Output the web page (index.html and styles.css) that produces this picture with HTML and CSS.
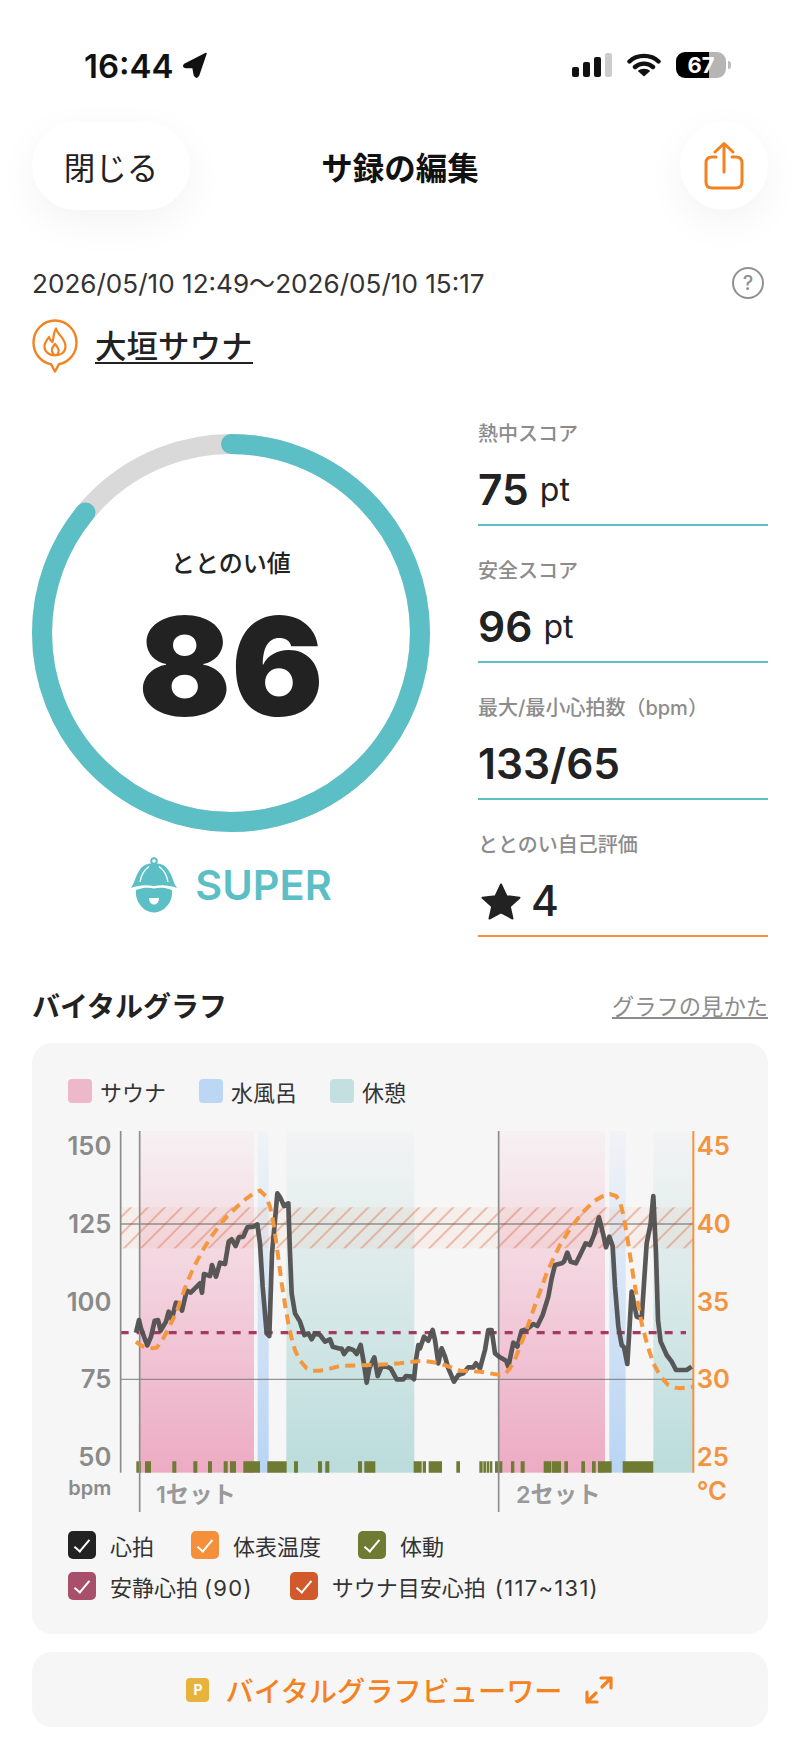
FILE: index.html
```html
<!DOCTYPE html>
<html lang="ja">
<head>
    <meta charset="UTF-8">
    <meta name="viewport" content="width=device-width, initial-scale=1.0">
    <title>サ録の編集</title>
    <link rel="stylesheet" href="styles.css">
</head>
<body>
    <div class="status-bar">
        <div class="status-left">
            <span class="clock">16:44</span>
            <svg class="arrow-icon" width="24" height="26" viewBox="0 0 24 26"><path d="M23 1.500 L1.500 12.500 Q-0.500 15 3 15.500 L10 15.500 L11.500 23.500 Q13.500 27 15.500 23.500 Z" fill="#111" stroke="#111" stroke-width="1.500" stroke-linejoin="round"/></svg>
        </div>
        <div class="status-right">
            <div class="signal">
                <i class="bar1"></i><i class="bar2"></i><i class="bar3"></i><i class="bar4"></i>
            </div>
            <svg width="34" height="25" viewBox="0 0 34 25"><path d="M2.5 9.5 C10 2 24 2 31.5 9.5 M8 15 C13 10.5 21 10.5 26 15" fill="none" stroke="#111" stroke-width="4.4" stroke-linecap="round"/><path d="M17 24.5 L10.8 19 C14 16 20 16 23.2 19 Z" fill="#111"/></svg>
            <div class="battery"><span>67</span></div>
            <div class="battery-nub"></div>
        </div>
    </div>

    <div class="top-bar">
        <div><button class="close-btn">閉じる</button></div>
        <div class="page-title">サ録の編集</div>
        <div class="share-wrap">
            <button class="share-btn">
                <svg width="40" height="50" viewBox="0 0 40 50"><path d="M12 16 H8 Q2 16 2 22 V41 Q2 47 8 47 H32 Q38 47 38 41 V22 Q38 16 32 16 H28 M20 31 V3 M11 11 L20 2.5 L29 11" fill="none" stroke="#f58220" stroke-width="3" stroke-linecap="round" stroke-linejoin="round"/></svg>
            </button>
        </div>
    </div>

    <div class="date-row">
        <span class="date-text">2026/05/10 12:49～2026/05/10 15:17</span>
        <span class="help-icon">?</span>
    </div>

    <div class="place-row">
        <svg width="46" height="54" viewBox="0 0 46 54">
            <path d="M19 45.2 C8.500 43.400 1.500 34 1.500 23.500 C1.500 11.500 11 1.500 23 1.500 C35 1.500 44.500 11.500 44.500 23.500 C44.500 34 37.500 43.400 27 45.200 L23 52.500 Z" fill="none" stroke="#f58220" stroke-width="2.4" stroke-linejoin="round"/>
            <path d="M24 9.500 C25.500 16 33.500 19 33.500 27.500 C33.500 33.500 28.500 36.500 23 36.500 C17 36.500 12.500 32.500 12.500 27.500 C12.500 23.500 15 21 17 18 C18 21 19 22 20.500 23 C22 19 21 14 24 9.500 Z M23 36.500 C20 34.500 19 31 20.500 28.500 L23 25 C25.500 28 27.500 30 26.500 33 C26 35 24.500 36.500 23 36.500" fill="none" stroke="#f58220" stroke-width="2.200" stroke-linejoin="round"/>
        </svg>
        <a class="place-name">大垣サウナ</a>
    </div>

    <div class="score-section">
        <div class="score-left">
            <div class="ring">
                <svg width="398" height="398" viewBox="0 0 398 398">
                    <circle cx="199" cy="199" r="189" fill="none" stroke="#d9d9d9" stroke-width="20"/>
                    <circle cx="199" cy="199" r="189" fill="none" stroke="#5cbfc6" stroke-width="20" stroke-linecap="round" stroke-dasharray="1021 1188" transform="rotate(-90 199 199)"/>
                </svg>
                <div class="ring-text">
                    <div class="ring-label">ととのい値</div>
                    <div class="ring-value">86</div>
                </div>
            </div>
            <div class="rank">
                <svg width="48" height="56" viewBox="0 0 48 56">
                    <circle cx="24" cy="4" r="2.800" fill="none" stroke="#5cbfc6" stroke-width="2"/>
                    <path d="M1 31 C5 26 6 14 14 8.500 C19 5.500 29 5.500 34 8.500 C42 14 43 26 47 31 C39 28 32 27.500 24 29 C16 27.500 9 28 1 31 Z" fill="#5cbfc6"/>
                    <path d="M10 25 C11 19 14 13 19 9.500 M38 25 C37 19 34 13 29 9.500" fill="none" stroke="#fff" stroke-width="1.300"/>
                    <path d="M6 33 C14 30 19 30.500 24 31.500 C29 30.500 34 30 42 33 C42.500 36 42 40 40.500 43.500 C37.500 50.500 31 55.500 24 55.500 C17 55.500 10.500 50.500 7.500 43.500 C6 40 5.500 36 6 33 Z" fill="#5cbfc6"/>
                    <path d="M19 41 H29 C29 45 27 47.500 24 47.500 C21 47.500 19 45 19 41 Z" fill="#fff"/>
                </svg>
                <span class="rank-name">SUPER</span>
            </div>
        </div>
        <div class="score-right">
            <div class="stat">
                <div class="stat-label">熱中スコア</div>
                <div class="stat-value">75<span class="unit">pt</span></div>
            </div>
            <div class="stat">
                <div class="stat-label">安全スコア</div>
                <div class="stat-value">96<span class="unit">pt</span></div>
            </div>
            <div class="stat">
                <div class="stat-label">最大/最小心拍数（bpm）</div>
                <div class="stat-value">133/65</div>
            </div>
            <div class="stat self-rating">
                <div class="stat-label">ととのい自己評価</div>
                <div class="stat-value">
                    <svg class="star" width="40" height="37" viewBox="0 0 40 37"><path d="M20 1.500 L25.500 13.200 L38.500 14.700 L28.800 23.400 L31.500 35.500 L20 29.300 L8.500 35.500 L11.200 23.400 L1.500 14.700 L14.500 13.200 Z" fill="#222" stroke="#222" stroke-width="2" stroke-linejoin="round"/></svg>
                    4
                </div>
            </div>
        </div>
    </div>

    <div class="graph-head">
        <h2>バイタルグラフ</h2>
        <a class="graph-link">グラフの見かた</a>
    </div>

    <div class="graph-card">
        <div class="zone-legend">
            <div class="zone"><i class="swatch sauna"></i>サウナ</div>
            <div class="zone"><i class="swatch water"></i>水風呂</div>
            <div class="zone"><i class="swatch rest"></i>休憩</div>
        </div>

        <!-- units are 3x screen pixels -->
        <svg class="chart" width="728" height="396" viewBox="0 0 2184 1188">
            <defs>
                <linearGradient id="gradSauna" x1="0" y1="0" x2="0" y2="1">
                    <stop offset="0" stop-color="#f6f1f3"/>
                    <stop offset="1" stop-color="#edabc3"/>
                </linearGradient>
                <linearGradient id="gradWater" x1="0" y1="0" x2="0" y2="1">
                    <stop offset="0" stop-color="#f1f3f6"/>
                    <stop offset="1" stop-color="#b8d4f4"/>
                </linearGradient>
                <linearGradient id="gradRest" x1="0" y1="0" x2="0" y2="1">
                    <stop offset="0" stop-color="#f3f4f4"/>
                    <stop offset="1" stop-color="#bbdcdc"/>
                </linearGradient>
                <pattern id="hatch" width="36" height="36" patternUnits="userSpaceOnUse" patternTransform="rotate(45)">
                    <line x1="18" y1="0" x2="18" y2="36" stroke="#d95c32" stroke-width="3" stroke-opacity=".7"/>
                </pattern>
            </defs>

            <rect x="299" y="33" width="343" height="1025" fill="url(#gradSauna)"/>
            <rect x="653" y="33" width="33" height="1025" fill="url(#gradWater)"/>
            <rect x="739" y="33" width="384" height="1025" fill="url(#gradRest)"/>
            <rect x="1377" y="33" width="318" height="1025" fill="url(#gradSauna)"/>
            <rect x="1708" y="33" width="49" height="1025" fill="url(#gradWater)"/>
            <rect x="1840" y="33" width="120" height="1025" fill="url(#gradRest)"/>

            <rect x="242" y="262" width="1718" height="123" fill="#e8a283" fill-opacity=".1"/>
            <rect x="242" y="262" width="1718" height="123" fill="url(#hatch)"/>

            <line x1="242" y1="312" x2="1960" y2="312" stroke="#6b6b6b" stroke-opacity=".7" stroke-width="4"/>
            <line x1="242" y1="778" x2="1960" y2="778" stroke="#6b6b6b" stroke-opacity=".7" stroke-width="4"/>

            <line x1="242" y1="638" x2="1938" y2="638" stroke="#a53a60" stroke-width="10" stroke-dasharray="24 24"/>

            <path fill="#6f7a33" d="M289 1024h14v34h-14z M315 1024h18v34h-18z M397 1024h12v34h-12z M460 1024h12v34h-12z M504 1024h12v34h-12z M551 1024h12v34h-12z M570 1024h18v34h-18z M610 1024h50v34h-50z M682 1024h58v34h-58z M762 1024h12v34h-12z M834 1024h12v34h-12z M856 1024h12v34h-12z M954 1024h12v34h-12z M973 1024h33v34h-33z M1121 1024h24v34h-24z M1148 1024h10v34h-10z M1166 1024h40v34h-40z M1249 1024h11v34h-11z M1318 1024h10v34h-10z M1330 1024h8v34h-8z M1340 1024h8v34h-8z M1350 1024h7v34h-7z M1365 1024h22v34h-22z M1413 1024h10v34h-10z M1442 1024h12v34h-12z M1511 1024h22v34h-22z M1535 1024h28v34h-28z M1573 1024h11v34h-11z M1624 1024h11v34h-11z M1656 1024h11v34h-11z M1674 1024h41v34h-41z M1748 1024h92v34h-92z"/>

            <line x1="242" y1="33" x2="242" y2="1058" stroke="#8c8c8c" stroke-width="5"/>
            <line x1="299" y1="33" x2="299" y2="1176" stroke="#8c8c8c" stroke-width="5"/>
            <line x1="1376" y1="33" x2="1376" y2="1176" stroke="#8c8c8c" stroke-width="5"/>
            <line x1="1960" y1="33" x2="1960" y2="1058" stroke="#f39440" stroke-width="6"/>

            <polyline class="heart-line" points="288,638 297,600 303,625 312,650 322,676 333,650 344,602 354,600 362,632 378,605 386,575 395,598 408,548 418,552 426,572 440,512 452,518 470,500 480,490 486,518 492,462 510,468 516,435 528,470 540,428 555,432 566,365 575,358 587,378 597,352 610,350 622,322 640,320 652,313 660,370 668,500 680,640 688,648 696,400 705,300 712,220 722,235 732,258 745,250 750,400 755,520 765,580 780,605 793,645 805,640 815,658 825,640 840,645 855,665 870,658 878,680 895,685 905,686 912,702 925,685 940,690 950,702 962,675 970,720 980,788 988,745 1003,712 1013,768 1025,740 1040,740 1052,745 1070,778 1090,778 1098,768 1115,770 1122,778 1128,720 1135,675 1140,685 1152,650 1165,662 1178,630 1185,660 1195,730 1205,685 1215,710 1225,745 1242,785 1255,765 1270,760 1285,742 1300,742 1308,730 1320,745 1335,690 1345,630 1355,630 1365,700 1380,712 1398,722 1405,740 1420,668 1432,680 1445,632 1460,628 1480,612 1492,618 1508,585 1525,530 1535,475 1545,435 1565,430 1572,425 1582,398 1592,425 1608,430 1630,385 1637,370 1650,375 1662,345 1677,292 1690,345 1698,382 1708,350 1718,378 1725,500 1735,620 1745,675 1752,682 1762,732 1775,515 1790,590 1805,595 1820,370 1832,310 1840,228 1848,400 1854,600 1862,665 1880,705 1895,725 1908,750 1940,750 1955,740"/>
            <polyline class="temp-line" points="288,665 303,677 320,683 338,685 350,683 364,665 378,640 394,608 410,575 425,532 440,490 455,456 470,425 490,388 510,355 535,321 560,290 590,261 620,235 642,219 660,212 677,228 690,260 698,296 705,340 715,413 725,490 735,553 745,610 754,652 765,690 780,722 800,745 818,752 840,752 870,746 900,738 950,736 1000,735 1040,733 1080,730 1110,726 1150,722 1200,730 1260,752 1320,755 1380,765 1397,760 1410,745 1425,718 1440,680 1460,627 1480,570 1500,515 1520,460 1540,416 1560,375 1585,335 1610,300 1635,270 1660,245 1685,230 1710,222 1728,228 1740,245 1750,285 1760,340 1770,405 1780,470 1792,540 1805,610 1822,675 1840,730 1862,770 1885,795 1905,803 1920,805 1940,803 1960,800"/>

            <text class="axis-left" x="214" y="106">150</text>
            <text class="axis-left" x="214" y="340">125</text>
            <text class="axis-left" x="214" y="573">100</text>
            <text class="axis-left" x="214" y="805">75</text>
            <text class="axis-left" x="214" y="1038">50</text>
            <text class="axis-unit" x="214" y="1126">bpm</text>
            <text class="set-label" x="348" y="1150">1セット</text>
            <text class="set-label" x="1428" y="1150">2セット</text>
            <text class="axis-right" x="1970" y="106">45</text>
            <text class="axis-right" x="1970" y="340">40</text>
            <text class="axis-right" x="1970" y="573">35</text>
            <text class="axis-right" x="1970" y="805">30</text>
            <text class="axis-right" x="1970" y="1038">25</text>
            <text class="axis-right" x="1970" y="1140">°C</text>
        </svg>

        <div class="series-legend">
            <div class="series-row">
                <label class="series"><i class="check c-heart"></i>心拍</label>
                <label class="series"><i class="check c-temp"></i>体表温度</label>
                <label class="series"><i class="check c-move"></i>体動</label>
            </div>
            <div class="series-row">
                <label class="series"><i class="check c-resting"></i><span>安静心拍<span class="num short">(90)</span></span></label>
                <label class="series"><i class="check c-target"></i><span>サウナ目安心拍<span class="num">(117~131)</span></span></label>
            </div>
        </div>
    </div>

    <div class="viewer-btn">
        <span class="p-badge">P</span>
        <span class="viewer-text">バイタルグラフビューワー</span>
        <svg width="30" height="30" viewBox="0 0 30 30"><path d="M3 27 L12 18 M3 17 V27 H13 M27 3 L18 12 M17 3 H27 V13" fill="none" stroke="#f58220" stroke-width="3.200" stroke-linecap="round" stroke-linejoin="round"/></svg>
    </div>
</body>
</html>
```

FILE: styles.css
```css
body {
    margin: 0;
    background-color: #fff;
    color: #222;
    font-family: Inter, "Noto Sans CJK JP", sans-serif;
}

/* status bar */
.status-bar {
    display: flex;
    justify-content: space-between;
    height: 122px;
    padding: 52px 69px 0 84px;
    box-sizing: border-box;
}

.status-left {
    display: flex;
    align-items: flex-start;
    gap: 9px;
}

.clock {
    margin-top: 1px;
    font-size: 33px;
    font-weight: 600;
    line-height: 26px;
    color: #111;
}

.status-right {
    display: flex;
    align-items: flex-start;
    gap: 15px;
    height: 26px;
}

.signal {
    display: flex;
    align-items: flex-end;
    gap: 4px;
    height: 25px;
}

.signal i {
    display: block;
    width: 7px;
    border-radius: 2px;
    background-color: #111;
}

.signal .bar1 { height: 10px; }
.signal .bar2 { height: 15px; }
.signal .bar3 { height: 20px; }
.signal .bar4 { height: 24px; background-color: #ccc; }

.battery {
    width: 50px;
    height: 26px;
    border-radius: 9px;
    background: linear-gradient(to right, #000 66%, #b5b5b5 66%);
    color: #fff;
    font-size: 22px;
    font-weight: 700;
    line-height: 26px;
    text-align: center;
}

.battery-nub {
    width: 3px;
    height: 8px;
    margin: 9px 0 0 -13px;
    border-radius: 0 3px 3px 0;
    background-color: #bbb;
}

/* top bar */
.top-bar {
    display: grid;
    grid-template-columns: 1fr auto 1fr;
    align-items: center;
    height: 88px;
    padding: 0 32px;
}

.close-btn {
    width: 158px;
    height: 88px;
    border: none;
    border-radius: 44px;
    background-color: #fff;
    box-shadow: 0 12px 40px rgba(0, 0, 0, 0.05);
    color: #222;
    font-family: inherit;
    font-size: 31.5px;
}

.page-title {
    font-size: 31.5px;
    font-weight: 700;
    color: #111;
}

.share-wrap {
    display: flex;
    justify-content: flex-end;
}

.share-btn {
    display: flex;
    align-items: center;
    justify-content: center;
    width: 88px;
    height: 88px;
    padding: 0;
    border: none;
    border-radius: 50%;
    background-color: #fff;
    box-shadow: 0 12px 40px rgba(0, 0, 0, 0.05);
}

/* date and place */
.date-row {
    display: flex;
    align-items: center;
    justify-content: space-between;
    margin-top: 57px;
    padding: 0 32px;
    height: 32px;
}

.date-text {
    margin-bottom: 3px;
    font-size: 26.1px;
    color: #333;
    white-space: nowrap;
}

.help-icon {
    width: 28px;
    height: 28px;
    border: 2.5px solid #909090;
    border-radius: 50%;
    color: #909090;
    font-size: 20px;
    font-weight: 500;
    line-height: 28px;
    text-align: center;
    margin-right: 4px;
}

.place-row {
    display: flex;
    align-items: center;
    gap: 17px;
    margin-top: 20px;
    padding: 0 32px;
    height: 54px;
}

.place-name {
    margin: 6px 0 2px;
    font-size: 31.5px;
    font-weight: 500;
    color: #222;
    line-height: 30px;
    border-bottom: 2px solid #222;
}

/* score */
.score-section {
    display: flex;
    justify-content: space-between;
    margin-top: 47px;
    padding: 0 32px;
}

.score-left {
    width: 398px;
    padding-top: 14px;
}

.ring {
    position: relative;
    width: 398px;
    height: 398px;
}

.ring svg {
    display: block;
}

.ring-text {
    position: absolute;
    top: 0;
    left: 0;
    width: 100%;
    padding-top: 116px;
    text-align: center;
}

.ring-label {
    font-size: 24px;
    font-weight: 500;
    line-height: 28px;
    color: #222;
}

.ring-value {
    margin-top: 28px;
    font-size: 137px;
    font-weight: 900;
    line-height: 120px;
    color: #222;
}

.rank {
    display: flex;
    align-items: center;
    justify-content: center;
    gap: 17px;
    margin-top: 25px;
}

.rank-name {
    font-size: 41.5px;
    font-weight: 600;
    color: #5cbfc6;
}

.score-right {
    width: 290px;
}

.stat {
    height: 106px;
    margin-bottom: 31px;
    border-bottom: 2px solid #5cc0c6;
    box-sizing: border-box;
}

.self-rating {
    border-bottom-color: #f58f3a;
}

.stat-label {
    font-size: 20px;
    font-weight: 500;
    line-height: 28px;
    color: #8c8c8c;
    white-space: nowrap;
}

.stat-value {
    display: flex;
    align-items: center;
    margin-top: 16px;
    font-size: 42.5px;
    font-weight: 600;
    line-height: 52px;
    color: #222;
}

.unit {
    margin-left: 11px;
    font-size: 32px;
    font-weight: 400;
}

.self-rating .stat-value {
    font-weight: 500;
}

.star {
    margin: 0 10px 0 3px;
}

/* graph */
.graph-head {
    display: flex;
    align-items: center;
    justify-content: space-between;
    height: 40px;
    margin-top: 17px;
    padding: 0 32px;
}

.graph-head h2 {
    margin: 0;
    font-size: 28px;
    font-weight: 700;
    color: #222;
}

.graph-link {
    font-size: 22.3px;
    color: #8c8c8c;
    text-decoration: underline;
}

.graph-card {
    margin: 18px 32px 0;
    padding: 36px 0 34px;
    border-radius: 20px;
    background-color: #f6f6f6;
}

.zone-legend {
    display: flex;
    gap: 33px;
    height: 24px;
    padding-left: 36px;
}

.zone {
    display: flex;
    align-items: center;
    gap: 8px;
    font-size: 22px;
    color: #333;
}

.swatch {
    display: block;
    width: 24px;
    height: 24px;
    border-radius: 4px;
}

.swatch.sauna { background-color: #eeb8cb; }
.swatch.water { background-color: #bcd7f4; }
.swatch.rest { background-color: #c3dfdf; }

.chart {
    display: block;
    margin: 17px 0 0 8px;
}

.heart-line {
    fill: none;
    stroke: #4f4f4f;
    stroke-width: 14;
    stroke-linejoin: round;
    stroke-opacity: .95;
}

.temp-line {
    fill: none;
    stroke: #f4973e;
    stroke-width: 12;
    stroke-dasharray: 30 19;
}

.axis-left, .axis-right, .axis-unit {
    font-size: 77px;
    font-weight: 600;
}

.axis-left {
    fill: #8a8a8a;
    text-anchor: end;
}

.axis-unit {
    font-size: 60px;
    fill: #8a8a8a;
    text-anchor: end;
}

.axis-right {
    fill: #f39440;
}

.set-label {
    font-size: 70px;
    font-weight: 600;
    fill: #999;
}

.series-legend {
    margin-top: 15px;
    padding-left: 36px;
}

.series-row {
    display: flex;
    gap: 37px;
    height: 28px;
    margin-bottom: 13px;
}

.series-row:last-child {
    margin-bottom: 0;
}

.series {
    display: flex;
    align-items: center;
    gap: 14px;
    font-size: 22px;
    color: #333;
}

.num {
    margin-left: 9px;
    letter-spacing: 1.3px;
}

.num.short {
    margin-left: 6px;
}

.check {
    display: flex;
    align-items: center;
    justify-content: center;
    width: 28px;
    height: 28px;
    border-radius: 5px;
}

.check::after {
    content: "";
    width: 6px;
    height: 14px;
    margin-top: -3px;
    border-right: 2px solid #fff;
    border-bottom: 2px solid #fff;
    transform: rotate(40deg);
}

.c-heart { background-color: #222; }
.c-temp { background-color: #f58f3a; }
.c-move { background-color: #6f7a33; }
.c-resting { background-color: #a84f6c; }
.c-target { background-color: #d2592c; }

.viewer-btn {
    display: flex;
    align-items: center;
    justify-content: center;
    height: 75px;
    margin: 18px 32px 0;
    border-radius: 20px;
    background-color: #f6f6f6;
}

.p-badge {
    width: 23px;
    height: 24px;
    margin-right: 16px;
    border-radius: 4px;
    background-color: #e8b33c;
    color: #fff;
    font-size: 14px;
    font-weight: 700;
    line-height: 24px;
    text-align: center;
}

.viewer-text {
    margin-right: 21px;
    font-size: 28.2px;
    font-weight: 500;
    color: #f58220;
}
```
